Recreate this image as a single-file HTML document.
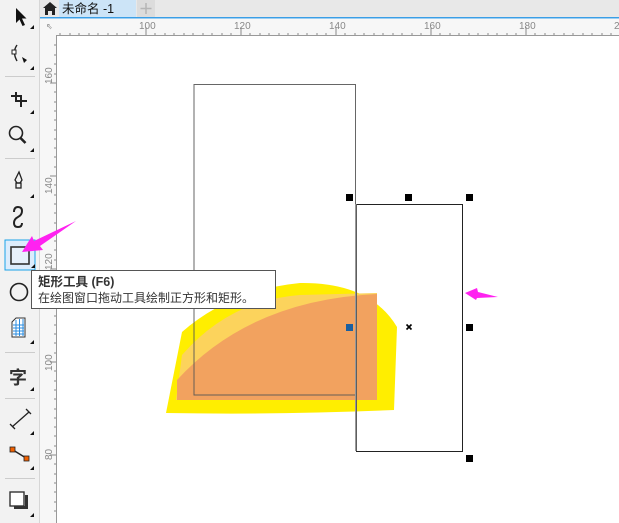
<!DOCTYPE html>
<html><head><meta charset="utf-8"><style>
body{margin:0;width:619px;height:523px;overflow:hidden;background:#fff;font-family:"Liberation Sans","Noto Sans CJK SC",sans-serif}
svg{position:absolute;left:0;top:0}
.tip{position:absolute;left:31px;top:270px;width:245px;height:39px;border:1px solid #555;background:#fff;font-size:12px;color:#333;line-height:16px;padding:0 0 0 6px;box-sizing:border-box}
</style></head><body>
<svg width="619" height="523" viewBox="0 0 619 523" font-family="Liberation Sans, Noto Sans CJK SC, sans-serif">
<rect x="0" y="0" width="39" height="523" fill="#f2f2f2"/>
<rect x="39" y="0" width="1" height="523" fill="#d6d6d6"/>
<g fill="#ccc"><rect x="5" y="76" width="30" height="1"/><rect x="5" y="158" width="30" height="1"/><rect x="5" y="352" width="30" height="1"/><rect x="5" y="398" width="30" height="1"/><rect x="5" y="478" width="30" height="1"/></g>
<g fill="#111">
<path d="M16 8 L16 23 L19.5 19.5 L22.5 26 L25 25 L22 18.5 L26.5 18.5 Z"/>
<path d="M30 29 l4 0 l0 -4 z M30 70 l4 0 l0 -4z M30 114 l4 0 l0 -4z M30 152 l4 0 l0 -4z M30 198 l4 0 l0 -4z M30 269 l4 0 l0 -4z M30 344 l4 0 l0 -4z M30 391 l4 0 l0 -4z M30 435 l4 0 l0 -4z M30 470 l4 0 l0 -4z M30 517 l4 0 l0 -4z"/>
<path d="M22 57 l5 3 l-3 3 z"/>
</g>
<g fill="none" stroke="#222" stroke-width="2">
<path d="M17 45 Q12 52 17 61" stroke-width="1.4"/>
<rect x="12" y="50" width="4" height="4" fill="#fff" stroke-width="1"/>
<path d="M11 96 h10 v11 M16 92 v9 h11"/>
<circle cx="16" cy="133" r="6.5" stroke-width="1.6"/><path d="M20.5 138 l5 5" stroke-width="2.6"/>
<path d="M19 172 l3 8 l-2 3 h-3 l-2 -3 z" stroke-width="1.3"/><rect x="16" y="183" width="5" height="5" stroke-width="1.3"/>
<path d="M14 212 q0 -5 4 -5 q4 0 4 4 q0 4 -4 6 q-4 2 -4 6 q0 4 4 4 q4 0 4 -4"/>
<circle cx="19" cy="292" r="8.5" stroke-width="1.6"/>
<path d="M12 427 L29 412 M10 424 l5 5 M26 409 l5 5" stroke-width="1.3"/>
<path d="M13 450 L26 458" stroke-width="1.5"/>
</g>
<rect x="5" y="240" width="30" height="30" fill="#dcecfc" stroke="#1aa3e8" stroke-width="1"/>
<rect x="11" y="247" width="18" height="17" fill="#e6f0fb" stroke="#333" stroke-width="1.6"/>
<path d="M31 268 l4 0 l0 -4z" fill="#111"/>
<g stroke="#333" stroke-width="1" fill="#fff"><path d="M12 322 l4 -4 h9 v19 h-13 z"/></g>
<g stroke="#2a8ce0" stroke-width="1"><path d="M13 325 h11 M13 328 h11 M13 331 h11 M13 334 h11 M16 320 v16 M19.5 319 v17 M23 319 v17"/></g>
<text x="9" y="384" font-size="18" font-weight="bold" fill="#333">字</text>
<rect x="10" y="447" width="5" height="5" fill="#f06000" stroke="#222" stroke-width="0.8"/>
<rect x="24" y="456" width="5" height="5" fill="#f06000" stroke="#222" stroke-width="0.8"/>
<rect x="10" y="492" width="14" height="14" fill="#fff" stroke="#333" stroke-width="1.4"/>
<path d="M25 495 h3 v14 h-14 v-3 h11 z" fill="#333"/>
<rect x="40" y="0" width="579" height="17" fill="#e8e8e8"/>
<rect x="40" y="17" width="579" height="1.5" fill="#3a9ee6"/>
<rect x="59" y="0" width="77" height="17" fill="#cce4f7"/>
<rect x="137" y="0" width="18" height="17" fill="#dcdcdc"/>
<path d="M146 3 v11 M140.5 8.5 h11" stroke="#b5b5b5" stroke-width="1.5"/>
<path d="M43 8 l7 -6 l7 6 h-2 v7 h-3 v-4 h-4 v4 h-3 v-7 z" fill="#222"/>
<text x="62" y="13" font-size="12.5" fill="#111">未命名 -1</text>
<rect x="40" y="19" width="579" height="17" fill="#f7f7f7"/>
<rect x="40" y="19" width="17" height="504" fill="#f7f7f7"/>
<rect x="57" y="35" width="562" height="1" fill="#999"/>
<rect x="56" y="35" width="1" height="488" fill="#999"/>
<g fill="#888" font-size="10">
<text x="139" y="29">100</text><text x="234" y="29">120</text><text x="329" y="29">140</text><text x="424" y="29">160</text><text x="519" y="29">180</text>
<text x="614" y="29">200</text>
<text x="46" y="29" font-size="8">⇖</text>
</g>
<g stroke="#888" stroke-width="1">
<path d="M146 27 v8 M241 27 v8 M336 27 v8 M431 27 v8 M526 27 v8 M60 33v2M70 33v2M79 33v2M89 33v2M98 33v2M108 33v2M117 33v2M127 33v2M136 33v2M155 33v2M165 33v2M174 33v2M184 33v2M193 33v2M203 33v2M212 33v2M222 33v2M231 33v2M250 33v2M260 33v2M269 33v2M279 33v2M288 33v2M298 33v2M307 33v2M317 33v2M326 33v2M345 33v2M355 33v2M364 33v2M374 33v2M383 33v2M393 33v2M402 33v2M412 33v2M421 33v2M440 33v2M450 33v2M459 33v2M469 33v2M478 33v2M488 33v2M497 33v2M507 33v2M516 33v2M535 33v2M545 33v2M554 33v2M564 33v2M573 33v2M583 33v2M592 33v2M602 33v2M611 33v2"/>
<path d="M50 83 h6 M50 176 h6 M50 269 h6 M50 362 h6 M50 455 h6 M54 45h2M54 55h2M54 64h2M54 74h2M54 92h2M54 102h2M54 111h2M54 120h2M54 130h2M54 139h2M54 148h2M54 157h2M54 167h2M54 185h2M54 195h2M54 204h2M54 213h2M54 223h2M54 232h2M54 241h2M54 250h2M54 260h2M54 278h2M54 288h2M54 297h2M54 306h2M54 316h2M54 325h2M54 334h2M54 343h2M54 353h2M54 371h2M54 381h2M54 390h2M54 399h2M54 409h2M54 418h2M54 427h2M54 436h2M54 446h2M54 464h2M54 474h2M54 483h2M54 492h2M54 502h2M54 511h2"/>
</g>
<g fill="#888" font-size="10">
<text transform="translate(52,84) rotate(-90)">160</text>
<text transform="translate(52,194) rotate(-90)">140</text>
<text transform="translate(52,270) rotate(-90)">120</text>
<text transform="translate(52,371) rotate(-90)">100</text>
<text transform="translate(52,460) rotate(-90)">80</text>
</g>
<path d="M166 413 L182 332 Q230 290 300 283 Q370 282 397 327 L394 410 Q280 415 166 413 Z" fill="#ffee00"/>
<path d="M176 400 L182 355 Q230 300 300 295 L377 293 L377 400 Z" fill="#fcd35c"/>
<path d="M177 400 L177 380 Q250 300 377 294 L377 400 Z" fill="#f2a25f"/>
<rect x="194" y="84.5" width="161.5" height="310.5" fill="none" stroke="#555" stroke-width="1" opacity="0.9"/>
<rect x="356.5" y="204.5" width="106" height="247" fill="none" stroke="#222" stroke-width="1"/>
<rect x="355" y="204" width="1.5" height="247" fill="#999"/>
<g fill="#000">
<rect x="346" y="194" width="7" height="7"/><rect x="405" y="194" width="7" height="7"/><rect x="466" y="194" width="7" height="7"/>
<rect x="466" y="324" width="7" height="7"/><rect x="466" y="455" width="7" height="7"/>
</g>
<rect x="346" y="324" width="7" height="7" fill="#1a5fa0"/>
<path d="M406.5 324.5 l5 5 M411.5 324.5 l-5 5" stroke="#000" stroke-width="1.6"/>
<path d="M22 252 L32 236 L34 241 L76 221 L40 246 L43 250 Z" fill="#ff22f0"/>
<path d="M465 293 L477 288 L478 292 L498 297 L477 298 L476 300 Z" fill="#ff22f0"/>
</svg>
<div class="tip"><div style="margin-top:3px"><b style="font-size:12.5px">矩形工具 (F6)</b></div><div>在绘图窗口拖动工具绘制正方形和矩形。</div></div>
</body></html>
